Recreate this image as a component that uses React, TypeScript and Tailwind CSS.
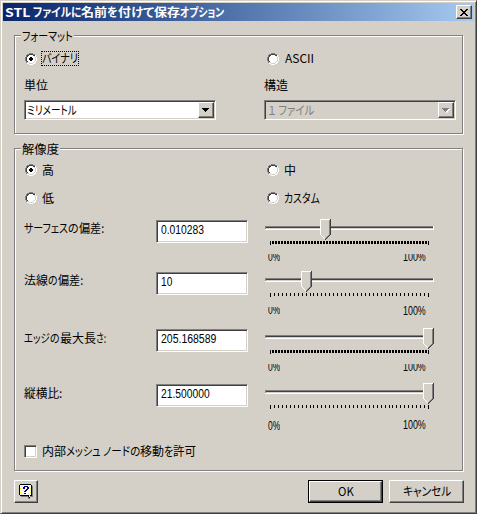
import { ReactNode, useLayoutEffect, useRef, useState } from "react";
import clsx from "clsx";

type FitProps = { text: string; width: number; className?: string };

function Fit({ text, width, className }: FitProps) {
  const ref = useRef<HTMLSpanElement>(null);
  const [scale, setScale] = useState(1);

  useLayoutEffect(() => {
    if (ref.current) setScale(width / ref.current.offsetWidth);
  }, [text, width]);

  return (
    <span className={clsx("inline-flex h-3 shrink-0", className)} style={{ width }}>
      <span
        ref={ref}
        className="origin-left shrink-0 whitespace-pre leading-3"
        style={{ transform: `scaleX(${scale})` }}
      >
        {text}
      </span>
    </span>
  );
}

function Label({ parts, className }: { parts: [string, number][]; className?: string }) {
  return (
    <span className={clsx("flex", className)}>
      {parts.map(([text, width]) => (
        <Fit key={text} text={text} width={width} />
      ))}
    </span>
  );
}

function Group({ title, className, children }: { title: ReactNode; className: string; children: ReactNode }) {
  return (
    <section
      className={clsx(
        "w-[449px] shrink-0 border border-[#808080] shadow-[1px_1px_0_#fff,inset_1px_1px_0_#fff]",
        className
      )}
    >
      <h2 className="-mt-[6px] ml-[6px] flex h-3 w-fit bg-[#d4d0c8] px-px">{title}</h2>
      {children}
    </section>
  );
}

function Radio({ checked, children }: { checked?: boolean; children: ReactNode }) {
  return (
    <label className="flex h-3 items-center">
      <svg width="12" height="12" shapeRendering="crispEdges" className="shrink-0">
        <path d="M4 1h4v1h2v2h1v4h-1v2h-2v1h-4v-1h-2v-2h-1v-4h1v-2h2z" fill="#fff" />
        <path d="M4 0h4v1h-4zM2 1h2v1h-2zM8 1h2v1h-2zM1 2h1v2h-1zM0 4h1v4h-1zM1 8h1v2h-1z" fill="#808080" />
        <path d="M4 1h4v1h-4zM2 2h2v1h-2zM8 2h2v1h-2zM2 3h1v1h-1zM1 4h1v4h-1zM2 8h1v1h-1z" fill="#404040" />
        <path d="M10 2h1v2h-1zM11 4h1v4h-1zM10 8h1v2h-1zM8 10h2v1h-2zM4 11h4v1h-4zM2 10h2v1h-2z" fill="#fff" />
        <path d="M9 3h1v1h-1zM10 4h1v4h-1zM9 8h1v1h-1zM8 9h1v1h-1zM4 10h4v1h-4zM2 9h2v1h-2z" fill="#d4d0c8" />
        {checked && <path d="M5 4h2v1h1v2h-1v1h-2v-1h-1v-2h1z" fill="#000" />}
      </svg>
      {children}
    </label>
  );
}

const sunken =
  "border border-t-[#808080] border-l-[#808080] border-r-white border-b-white shadow-[inset_1px_1px_0_#404040,inset_-1px_-1px_0_#d4d0c8]";
const raised =
  "border border-t-white border-l-white border-r-[#404040] border-b-[#404040] bg-[#d4d0c8] shadow-[inset_-1px_-1px_0_#808080]";

function Combo({ text, width, disabled }: { text: string; width: number; disabled?: boolean }) {
  return (
    <div
      className={clsx(
        "flex h-5 w-48 items-center justify-between pr-px",
        sunken,
        disabled ? "bg-[#d4d0c8] pl-[3px] text-[#808080]" : "bg-white pl-[2px]"
      )}
    >
      <Fit text={text} width={width} />
      <span className={clsx("flex h-4 w-4 items-center justify-center", raised)}>
        <svg width="8" height="5" shapeRendering="crispEdges">
          {disabled && <path d="M1 1h7v1h-1v1h-1v1h-1v1h-1v-1h-1v-1h-1v-1h-1z" fill="#fff" />}
          <path d="M0 0h7v1h-1v1h-1v1h-1v1h-1v-1h-1v-1h-1v-1h-1z" fill={disabled ? "#808080" : "#000"} />
        </svg>
      </span>
    </div>
  );
}

type Deviation = {
  label: [string, number][];
  value: string;
  valueWidth: number;
  thumb: number;
  dense: boolean;
  height: string;
  labelPad: string;
  minTop: string;
  maxTop: string;
  clipMin: boolean;
  clipMax: boolean;
};

const rows: Deviation[] = [
  {
    label: [["サーフェス", 44], ["の", 11], ["偏差:", 25]],
    value: "0.010283", valueWidth: 43, thumb: 55, dense: true,
    height: "h-[52px]", labelPad: "pt-[3px]", minTop: "mt-[9px]", maxTop: "mt-[9px]", clipMin: true, clipMax: true,
  },
  {
    label: [["法線", 24], ["の", 10], ["偏差:", 25]],
    value: "10", valueWidth: 11, thumb: 36, dense: false,
    height: "h-[57px]", labelPad: "pt-[3px]", minTop: "mt-[10px]", maxTop: "mt-[8px]", clipMin: true, clipMax: false,
  },
  {
    label: [["エッジ", 26], ["の", 10], ["最大長", 36], ["さ:", 10]],
    value: "205.168589", valueWidth: 55, thumb: 158, dense: true,
    height: "h-[55px]", labelPad: "pt-[4px]", minTop: "mt-[10px]", maxTop: "mt-[10px]", clipMin: true, clipMax: true,
  },
  {
    label: [["縦横比:", 38]],
    value: "21.500000", valueWidth: 49, thumb: 158, dense: false,
    height: "h-[62px]", labelPad: "pt-[4px]", minTop: "mt-[11px]", maxTop: "mt-[10px]", clipMin: false, clipMax: false,
  },
];

function Slider({ thumb, dense }: { thumb: number; dense: boolean }) {
  const ticks = dense
    ? Array.from({ length: 52 }, (_, i) => 7 + i * 3)
    : Array.from({ length: 39 }, (_, i) => 5 + Math.round((158 * (i + 1)) / 40));
  return (
    <svg width="169" height="26" shapeRendering="crispEdges" className="block">
      <path d="M0 7h169v4h-169z" fill="#fff" />
      <path d="M0 7h168v1h-168zM0 7h1v3h-1z" fill="#808080" />
      <path d="M1 8h167v1h-167z" fill="#404040" />
      <path d="M1 9h167v1h-167z" fill="#d4d0c8" />
      <path d="M5 22h1v4h-1zM163 22h1v4h-1z" fill="#000" />
      {ticks.map((x) => (
        <rect key={x} x={x} y="22" width={dense ? 2 : 1} height="3" fill="#000" />
      ))}
      <g transform={`translate(${thumb} 0)`}>
        <path d="M0 0h11v16l-5 5h-1l-5-5z" fill="#d4d0c8" />
        <path d="M0 0h10v1h-9v15h-1zM1 16h1v1h-1zM2 17h1v1h-1zM3 18h1v1h-1zM4 19h1v1h-1z" fill="#fff" />
        <path d="M9 1h1v15h-1zM8 16h1v1h-1zM7 17h1v1h-1zM6 18h1v1h-1zM5 19h1v1h-1z" fill="#808080" />
        <path d="M10 0h1v16h-1zM9 16h1v1h-1zM8 17h1v1h-1zM7 18h1v1h-1zM6 19h1v1h-1zM5 20h1v1h-1z" fill="#404040" />
      </g>
    </svg>
  );
}

function Percent({ text, width, top, clip }: { text: string; width: number; top: string; clip: boolean }) {
  return (
    <span className={clsx("flex overflow-hidden font-['Liberation_Sans'] text-[12px]", top, clip ? "h-[9px] items-end" : "h-3")}>
      <Fit text={text} width={width} />
    </span>
  );
}

function DeviationRow({ row }: { row: Deviation }) {
  return (
    <div className={clsx("flex items-start pl-[9px]", row.height)}>
      <Label parts={row.label} className={clsx("w-[132px]", row.labelPad)} />
      <div className={clsx("mt-px flex h-[23px] w-[92px] bg-white pt-[3px] pl-1 font-['Liberation_Sans']", sunken)}>
        <Fit text={row.value} width={row.valueWidth} />
      </div>
      <div className="ml-[17px] w-[169px]">
        <Slider thumb={row.thumb} dense={row.dense} />
        <div className="flex items-start justify-between pr-2 pl-[3px]">
          <Percent text="0%" width={12} top={row.minTop} clip={row.clipMin} />
          <Percent text="100%" width={23} top={row.maxTop} clip={row.clipMax} />
        </div>
      </div>
    </div>
  );
}

export default function App() {
  return (
    <main className="flex h-[514px] w-[477px] flex-col overflow-hidden border border-t-[#d4d0c8] border-r-[#404040] border-b-[#404040] border-l-[#d4d0c8] bg-[#d4d0c8] p-[2px] font-['Noto_Sans_CJK_JP',sans-serif] text-[12px] leading-3 text-black shadow-[inset_1px_1px_0_#fff,inset_-1px_-1px_0_#808080] [font-feature-settings:'palt']">
      <header className="flex h-[18px] shrink-0 items-center justify-between bg-linear-to-r from-[#0a246a] to-[#a6caf0] pr-[2px] pl-[2px] font-bold text-white">
        <Label parts={[["STL ", 28], ["ファイルに", 48], ["名前", 26], ["を", 11], ["付", 13], ["けて", 23], ["保存", 26], ["オプション", 44]]} />
        <button className={clsx("flex h-[14px] w-4 items-center justify-center", raised)}>
          <svg width="8" height="7" shapeRendering="crispEdges">
            <path d="M0 0h2v1h1v1h2v-1h1v-1h2v1h-1v1h-1v1h-1v1h1v1h1v1h1v1h-2v-1h-1v-1h-2v1h-1v1h-2v-1h1v-1h1v-1h1v-1h-1v-1h-1v-1h-1z" />
          </svg>
        </button>
      </header>

      <Group title={<Fit text="フォーマット" width={51} />} className="mt-[14px] ml-[11px] h-[99px]">
        <div className="mt-[9px] flex h-[15px] items-center pl-[10px]">
          <div className="w-[242px]">
            <Radio checked>
              <span className="ml-1 flex h-[15px] w-[38px] items-start border border-dotted border-black">
                <Fit text="バイナリ" width={36} />
              </span>
            </Radio>
          </div>
          <Radio>
            <Fit text="ASCII" width={29} className="mb-[2px] ml-[6px]" />
          </Radio>
        </div>
        <div className="mt-[13px] mb-[9px] flex pl-[9px]">
          <Fit text="単位" width={24} />
          <Fit text="構造" width={24} className="ml-[216px]" />
        </div>
        <div className="flex gap-12 pl-[9px]">
          <Combo text="ミリメートル" width={50} />
          <Combo text="１ ファイル" width={46} disabled />
        </div>
      </Group>

      <Group title={<Fit text="解像度" width={37} />} className="mt-[14px] ml-[11px] h-[323px]">
        <div className="mt-[9px] grid grid-cols-[242px_1fr] gap-y-4 pl-[10px]">
          <Radio checked>
            <Fit text="高" width={12} className="ml-[5px]" />
          </Radio>
          <Radio>
            <Fit text="中" width={12} className="ml-[5px]" />
          </Radio>
          <Radio>
            <Fit text="低" width={12} className="ml-[5px]" />
          </Radio>
          <Radio>
            <Fit text="カスタム" width={36} className="ml-[5px]" />
          </Radio>
        </div>
        <div className="mt-[15px]">
          {rows.map((row) => (
            <DeviationRow key={row.value} row={row} />
          ))}
        </div>
        <label className="flex h-[13px] items-center pl-[9px]">
          <span className={clsx("mr-[5px] h-[13px] w-[13px] bg-white", sunken)} />
          <Label className="pb-px" parts={[["内部", 24], ["メッシュ ", 37], ["ノードの", 37], ["移動", 24], ["を", 9], ["許可", 23]]} />
        </label>
      </Group>

      <footer className="mt-[9px] flex h-[23px] shrink-0 pl-[11px]">
        <button className={clsx("flex w-6 items-center justify-center", raised)}>
          <svg width="14" height="15" shapeRendering="crispEdges">
            <path d="M2 1h11v1h1v11h-3v2h-2v-2h-7z" fill="#808080" />
            <path d="M1 0h11v1h1v11h-2v2h-1v-1h-1v-1h-8v-1h-1v-10h1z" fill="#000" />
            <path d="M1 1h11v10h-1v2h-1v-2h-9z" fill="#fff" />
            <path
              d="M2 2h1v1h-1zM10 2h1v1h-1zM1 4h1v1h-1zM11 4h1v1h-1zM2 6h1v1h-1zM10 6h1v1h-1zM1 8h1v1h-1zM11 8h1v1h-1zM2 10h1v1h-1zM4 9h1v1h-1zM9 9h1v1h-1zM10 10h1v2h-1zM5 4h1v1h-1zM4 6h1v1h-1z"
              fill="#ffff00"
            />
            <path d="M5 2h4v1h1v2h-1v1h-1v1h-1v1h-2v-1h1v-1h1v-1h1v-2h-2v2h-2v-2h1zM5 9h2v1h-2z" fill="#000080" />
          </svg>
        </button>
        <button className="ml-[270px] flex w-[75px] border border-black">
          <span className={clsx("flex h-full w-full items-center justify-center pb-px", raised)}>
            <Fit text="OK" width={16} />
          </span>
        </button>
        <button className={clsx("ml-[6px] flex w-[75px] items-center justify-center pb-px", raised)}>
          <Fit text="キャンセル" width={48} />
        </button>
      </footer>
    </main>
  );
}
